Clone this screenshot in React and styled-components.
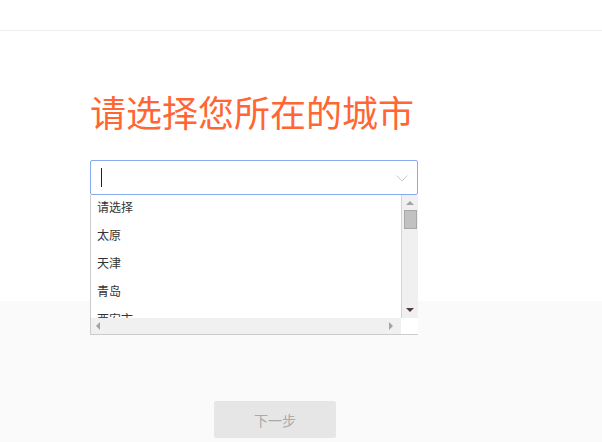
import React from 'react';
import styled, { createGlobalStyle } from 'styled-components';

const GlobalStyle = createGlobalStyle`
    html, body {
        margin: 0;
        padding: 0;
        background: #fafafa;
        font-family: "Noto Sans CJK SC", "Noto Sans", sans-serif;
    }
`;

const cities = ['请选择', '太原', '天津', '青岛', '西安市'];

const App = () => {
    return (
        <Page>
            <GlobalStyle />
            <Header />
            <Main>
                <Title>请选择您所在的城市</Title>
                <SelectBox>
                    <Caret />
                    <Chevron width="12" height="7" viewBox="0 0 12 7">
                        <path d="M0.5 0.5 L6 6 L11.5 0.5" fill="none" stroke="#cccccc" strokeWidth="1" />
                    </Chevron>
                    <Dropdown>
                        <List>
                            {cities.map((city) => (
                                <Option key={city}>{city}</Option>
                            ))}
                        </List>
                        <VScroll>
                            <Arrow dir="up" />
                            <Thumb />
                            <Spacer />
                            <Arrow dir="down" dark />
                        </VScroll>
                        <HScroll>
                            <Arrow dir="left" />
                            <Spacer />
                            <Arrow dir="right" />
                        </HScroll>
                        <Corner />
                    </Dropdown>
                </SelectBox>
            </Main>
            <Footer>
                <NextButton>下一步</NextButton>
            </Footer>
        </Page>
    );
};

const Page = styled.div`
    min-height: 442px;
    display: flex;
    flex-direction: column;
`;

const Header = styled.div`
    height: 30px;
    background: #fff;
    border-bottom: 1px solid #eeeeee;
`;

const Main = styled.div`
    height: 270px;
    background: #fff;
    padding: 60px 0 0 90px;
    box-sizing: border-box;
`;

const Title = styled.h1`
    margin: 0;
    font-size: 36px;
    line-height: 40px;
    font-weight: 400;
    color: #ff6633;
    letter-spacing: 0;
`;

const SelectBox = styled.div`
    position: relative;
    margin-top: 29px;
    width: 328px;
    height: 35px;
    box-sizing: border-box;
    border: 1px solid #85aaf0;
    border-radius: 2px;
    background: #fff;
`;

const Caret = styled.span`
    position: absolute;
    left: 10px;
    top: 7px;
    width: 1px;
    height: 19px;
    background: #222;
`;

const Chevron = styled.svg`
    position: absolute;
    right: 9px;
    top: 14px;
`;

const Dropdown = styled.div`
    position: absolute;
    left: -1px;
    top: 34px;
    width: 328px;
    height: 140px;
    box-sizing: border-box;
    border-left: 1px solid #cccccc;
    border-bottom: 1px solid #cccccc;
    background: #fff;
    display: grid;
    grid-template-columns: 1fr 17px;
    grid-template-rows: 1fr 16px;
    z-index: 2;
`;

const List = styled.div`
    overflow: hidden;
    padding-top: 0;
    margin-top: -2px;
`;

const Option = styled.div`
    height: 28px;
    line-height: 28px;
    padding-left: 6px;
    font-size: 12px;
    color: #333;
`;

const VScroll = styled.div`
    background: #f0f0f0;
    border-left: 1px solid #d4d4d4;
    display: flex;
    flex-direction: column;
    align-items: center;
    padding: 6px 0 6px;
`;

const HScroll = styled.div`
    background: #f0f0f0;
    display: flex;
    align-items: center;
    padding: 0 8px 0 5px;
`;

const Corner = styled.div`
    background: #fff;
`;

const Spacer = styled.div`
    flex: 1;
`;

const arrowBorders = {
    up: 'border-left: 4px solid transparent; border-right: 4px solid transparent; border-bottom: 4px solid;',
    down: 'border-left: 4px solid transparent; border-right: 4px solid transparent; border-top: 4px solid;',
    left: 'border-top: 4px solid transparent; border-bottom: 4px solid transparent; border-right: 4px solid;',
    right: 'border-top: 4px solid transparent; border-bottom: 4px solid transparent; border-left: 4px solid;',
};

const Arrow = styled.span`
    width: 0;
    height: 0;
    ${props => arrowBorders[props.dir]}
    color: ${props => props.dark ? '#503a40' : '#a3a3a3'};
`;

const Thumb = styled.div`
    margin-top: 5px;
    width: 11px;
    height: 17px;
    background: #c1c1c1;
    border: 1px solid #a8a8a8;
`;

const Footer = styled.div`
    flex: 1;
    background: #fafafa;
    padding: 100px 0 0 214px;
`;

const NextButton = styled.button`
    width: 122px;
    height: 37px;
    border: none;
    border-radius: 2px;
    background: #e6e6e6;
    color: #aaaaaa;
    font-family: inherit;
    font-size: 14px;
    cursor: not-allowed;
`;

export default App;
